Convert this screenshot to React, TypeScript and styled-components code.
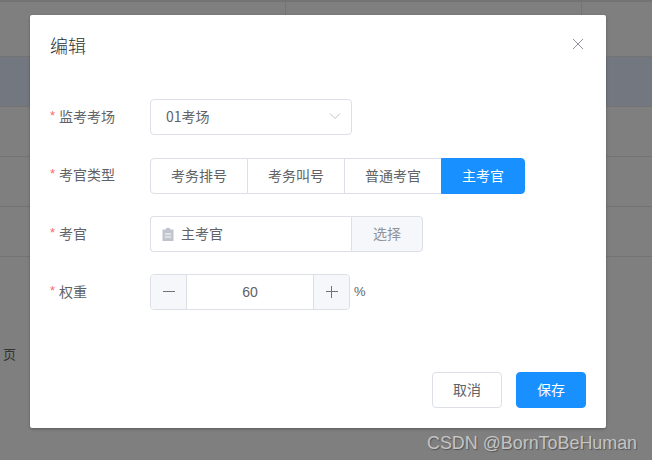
import React from "react";
import styled, { createGlobalStyle } from "styled-components";

const Global = createGlobalStyle`
  html, body { margin: 0; padding: 0; background: #7f7f7f; }
  * { box-sizing: border-box; }
  body { font-family: "Liberation Sans", "Noto Sans CJK SC", sans-serif; }
`;

const Page = styled.div`
  position: relative;
  width: 652px;
  height: 460px;
  overflow: hidden;
  background: #7f7f7f;
`;

const TableBack = styled.div`
  display: flex;
  flex-direction: column;
`;

const TopRow = styled.div`
  height: 57px;
  border-top: 2px solid #737373;
  border-bottom: 1px solid #737373;
  display: flex;
`;

const TopCell = styled.div<{ $w: number }>`
  width: ${(p) => p.$w}px;
  height: 100%;
  border-right: 1px solid #737373;
`;

const BackRow = styled.div<{ $active?: boolean }>`
  height: 50px;
  border-bottom: 1px solid #737373;
  background: ${(p) => (p.$active ? "#737780" : "transparent")};
`;

const Pager = styled.div`
  padding: 88px 0 0 3px;
  font-size: 13px;
  line-height: 18px;
  color: #333;
  font-family: "Noto Sans CJK SC", sans-serif;
`;

const Dialog = styled.div`
  position: absolute;
  left: 30px;
  top: 15px;
  width: 576px;
  height: 413px;
  background: #fff;
  border-radius: 2px;
  box-shadow: 0 1px 3px rgba(0, 0, 0, 0.3);
  display: flex;
  flex-direction: column;
  font-family: "Noto Sans CJK SC", sans-serif;
`;

const Header = styled.div`
  display: flex;
  justify-content: space-between;
  align-items: flex-start;
  padding: 18px 22px 0 20px;
  height: 84px;
`;

const Title = styled.div`
  font-size: 18px;
  line-height: 24px;
  font-weight: 300;
  color: #303133;
`;

const Close = styled.button`
  border: 0;
  background: none;
  padding: 0;
  margin-top: 5px;
  width: 12px;
  height: 12px;
  display: flex;
  color: #909399;
`;

const Form = styled.div`
  flex: 1;
  display: flex;
  flex-direction: column;
  padding-left: 20px;
`;

const Row = styled.div<{ $mb: number }>`
  display: flex;
  align-items: center;
  height: 36px;
  margin-bottom: ${(p) => p.$mb}px;
`;

const Label = styled.label`
  width: 100px;
  font-size: 14px;
  color: #606266;
  display: flex;
  align-items: center;
  line-height: 20px;
  margin-top: -3px;
`;

const Star = styled.span`
  color: #f56c6c;
  width: 9px;
  font-size: 13px;
  font-family: "Liberation Sans", sans-serif;
`;

const Select = styled.div`
  width: 202px;
  height: 36px;
  border: 1px solid #dcdfe6;
  border-radius: 4px;
  display: flex;
  align-items: center;
  justify-content: space-between;
  padding: 0 10px 2px 15px;
  font-size: 14px;
  color: #606266;
`;

const Chevron = styled.svg`
  width: 12px;
  height: 12px;
  color: #c0c4cc;
`;

const Segmented = styled.div`
  display: flex;
  height: 36px;
  margin-top: 2px;
`;

const Segment = styled.div<{ $w: number; $active?: boolean }>`
  width: ${(p) => p.$w}px;
  height: 36px;
  display: flex;
  align-items: center;
  justify-content: center;
  padding-bottom: 2px;
  font-size: 14px;
  border: 1px solid ${(p) => (p.$active ? "#1890ff" : "#dcdfe6")};
  border-left-width: ${(p) => (p.$active ? 1 : 0)}px;
  margin-left: ${(p) => (p.$active ? -1 : 0)}px;
  background: ${(p) => (p.$active ? "#1890ff" : "#fff")};
  color: ${(p) => (p.$active ? "#fff" : "#606266")};
  &:first-child {
    border-left-width: 1px;
    border-radius: 4px 0 0 4px;
  }
  &:last-child {
    border-radius: 0 4px 4px 0;
  }
`;

const PickGroup = styled.div`
  display: flex;
  height: 36px;
  width: 273px;
`;

const PickInput = styled.div`
  width: 201px;
  height: 36px;
  border: 1px solid #dcdfe6;
  border-right: 0;
  border-radius: 4px 0 0 4px;
  display: flex;
  align-items: center;
  gap: 7px;
  padding: 0 0 2px 11px;
  font-size: 14px;
  color: #606266;
`;

const PickIcon = styled.svg`
  width: 12px;
  height: 13px;
  margin-top: 2px;
  color: #c0c4cc;
`;

const PickButton = styled.div`
  width: 72px;
  height: 36px;
  background: #f5f7fa;
  border: 1px solid #dcdfe6;
  border-radius: 0 4px 4px 0;
  display: flex;
  align-items: center;
  justify-content: center;
  padding-bottom: 2px;
  font-size: 14px;
  color: #909399;
`;

const Stepper = styled.div`
  display: flex;
  align-items: stretch;
  width: 200px;
  height: 36px;
  border: 1px solid #dcdfe6;
  border-radius: 4px;
  overflow: hidden;
`;

const StepButton = styled.div<{ $side: "left" | "right" }>`
  width: 36px;
  flex: none;
  background: #f5f7fa;
  display: flex;
  align-items: center;
  justify-content: center;
  color: #707276;
  ${(p) => (p.$side === "left" ? "border-right: 1px solid #dcdfe6;" : "border-left: 1px solid #dcdfe6;")}
`;

const StepIcon = styled.svg`
  width: 12px;
  height: 12px;
`;

const StepValue = styled.div`
  flex: 1;
  display: flex;
  align-items: center;
  justify-content: center;
  font-size: 14px;
  color: #606266;
  font-family: "Liberation Sans", sans-serif;
`;

const Unit = styled.span`
  margin: -1px 0 0 4px;
  font-size: 13px;
  color: #606266;
  font-family: "Liberation Sans", sans-serif;
`;

const Footer = styled.div`
  display: flex;
  justify-content: flex-end;
  gap: 14px;
  padding: 0 20px 20px;
`;

const Button = styled.button<{ $primary?: boolean }>`
  width: 70px;
  height: 36px;
  border-radius: 4px;
  font: 14px "Noto Sans CJK SC", sans-serif;
  padding: 0 0 2px;
  border: 1px solid ${(p) => (p.$primary ? "#1890ff" : "#dcdfe6")};
  background: ${(p) => (p.$primary ? "#1890ff" : "#fff")};
  color: ${(p) => (p.$primary ? "#fff" : "#606266")};
`;

const Watermark = styled.div`
  position: absolute;
  left: 427px;
  top: 433px;
  font-family: "Liberation Sans", sans-serif;
  font-size: 17.9px;
  line-height: 20px;
  color: #c4c4c4;
  text-shadow: 1px 1px 1px #555;
  white-space: nowrap;
`;

const FormRow = ({ label, mb, children }: { label: string; mb: number; children: React.ReactNode }) => (
  <Row $mb={mb}>
    <Label>
      <Star>*</Star>
      {label}
    </Label>
    {children}
  </Row>
);

export default function App() {
  return (
    <Page>
      <Global />
      <TableBack>
        <TopRow>
          <TopCell $w={286} />
          <TopCell $w={296} />
        </TopRow>
        <BackRow $active />
        <BackRow />
        <BackRow />
        <BackRow />
        <Pager>页</Pager>
      </TableBack>
      <Dialog>
        <Header>
          <Title>编辑</Title>
          <Close aria-label="close">
            <svg viewBox="0 0 12 12" width="12" height="12" fill="none" stroke="currentColor" strokeWidth="1">
              <path d="M1 1l10 10M11 1L1 11" />
            </svg>
          </Close>
        </Header>
        <Form>
          <FormRow label="监考考场" mb={22}>
            <Select>
              01考场
              <Chevron viewBox="0 0 12 12" fill="none" stroke="currentColor" strokeWidth="1">
                <path d="M1 3.500l5 5 5-5" />
              </Chevron>
            </Select>
          </FormRow>
          <FormRow label="考官类型" mb={23}>
            <Segmented>
              <Segment $w={98}>考务排号</Segment>
              <Segment $w={97}>考务叫号</Segment>
              <Segment $w={97}>普通考官</Segment>
              <Segment $w={84} $active>主考官</Segment>
            </Segmented>
          </FormRow>
          <FormRow label="考官" mb={22}>
            <PickGroup>
              <PickInput>
                <PickIcon viewBox="0 0 12 13" fill="currentColor">
                  <path d="M4 0h4v1.500h3.500V13H.5V1.500H4zM2.800 5.500v1h6.400v-1zM2.800 8.500v1h6.400v-1z" fillRule="evenodd" />
                </PickIcon>
                主考官
              </PickInput>
              <PickButton>选择</PickButton>
            </PickGroup>
          </FormRow>
          <FormRow label="权重" mb={0}>
            <Stepper>
              <StepButton $side="left">
                <StepIcon viewBox="0 0 12 12" stroke="currentColor" strokeWidth="1">
                  <path d="M0 5.500h12" />
                </StepIcon>
              </StepButton>
              <StepValue>60</StepValue>
              <StepButton $side="right">
                <StepIcon viewBox="0 0 12 12" stroke="currentColor" strokeWidth="1">
                  <path d="M0 5.500h12M5.500 0v12" />
                </StepIcon>
              </StepButton>
            </Stepper>
            <Unit>%</Unit>
          </FormRow>
        </Form>
        <Footer>
          <Button>取消</Button>
          <Button $primary>保存</Button>
        </Footer>
      </Dialog>
      <Watermark>CSDN @BornToBeHuman</Watermark>
    </Page>
  );
}
